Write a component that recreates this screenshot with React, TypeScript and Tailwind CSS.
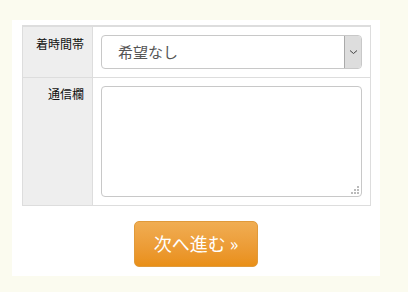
import React from "react"

const font = { fontFamily: '"Noto Sans CJK JP", "Noto Sans", sans-serif' }

const App = () => {
    return (
        <div className="w-[408px] h-[292px] bg-[#fbfbef] pt-[20px] pl-[12px]" style={font}>
            <div className="w-[368px] h-[256px] bg-white pt-[5px] pl-[10px] flex flex-col">
                <table className="w-[349px] border-collapse border-t-2 border-[#dddddd]">
                    <tbody>
                        <tr className="h-[51px]">
                            <th className="w-[70px] bg-[#eeeeee] border border-[#dddddd] border-t-0 align-top text-right pr-[8px] pt-[9px] text-[12px] font-normal text-[#111] leading-[16px]">
                                着時間帯
                            </th>
                            <td className="border border-[#dddddd] border-t-0 pl-[8px] pr-[8px] align-top pt-[8px]">
                                <div className="flex h-[34px] w-[261px] border border-[#c8c8c8] rounded-[4px] overflow-hidden">
                                    <div className="flex-1 pl-[16px] flex items-center text-[15px] text-[#555]">希望なし</div>
                                    <div className="w-[17px] bg-[#dddddd] border-l border-[#aaaaaa] flex items-center justify-center">
                                        <svg width="9" height="6" viewBox="0 0 9 6">
                                            <path d="M1 1.5 L4.5 4.5 L8 1.5" fill="none" stroke="#444" strokeWidth="1" />
                                        </svg>
                                    </div>
                                </div>
                            </td>
                        </tr>
                        <tr className="h-[128px]">
                            <th className="bg-[#eeeeee] border border-[#dddddd] align-top text-right pr-[8px] pt-[8px] text-[12px] font-normal text-[#111] leading-[16px]">
                                通信欄
                            </th>
                            <td className="border border-[#dddddd] pl-[8px] pr-[8px] align-top pt-[8px]">
                                <div className="relative h-[111px] w-[261px] border border-[#c8c8c8] rounded-[4px] bg-white">
                                    <svg className="absolute right-[2px] bottom-[2px]" width="8" height="8" viewBox="0 0 8 8">
                                        <rect x="6" y="0" width="2" height="2" fill="#bbb" />
                                        <rect x="3" y="3" width="2" height="2" fill="#bbb" />
                                        <rect x="6" y="3" width="2" height="2" fill="#bbb" />
                                        <rect x="0" y="6" width="2" height="2" fill="#bbb" />
                                        <rect x="3" y="6" width="2" height="2" fill="#bbb" />
                                        <rect x="6" y="6" width="2" height="2" fill="#bbb" />
                                    </svg>
                                </div>
                            </td>
                        </tr>
                    </tbody>
                </table>
                <div className="flex justify-center pr-[10px] mt-[15px]">
                    <button className="w-[124px] h-[46px] rounded-[5px] border border-[#e09a3a] bg-gradient-to-b from-[#f0ad52] to-[#e98f16] text-white text-[18px] flex items-center justify-center">
                        次へ進む »
                    </button>
                </div>
            </div>
        </div>
    )
}

export default App
